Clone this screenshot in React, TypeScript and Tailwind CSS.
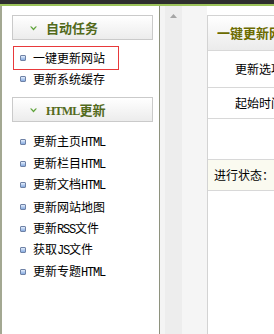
import React from "react";

const Bullet = () => (
  <span className="block w-[6px] h-[6px] border border-[#6f82a6] rounded-[1px] bg-linear-to-b from-[#e4eefc] to-[#86aadf] shrink-0" />
);

const En = ({ children }: { children: React.ReactNode }) => (
  <span className="font-['Liberation_Mono',monospace] text-[12px] tracking-[-1.2px]">{children}</span>
);

const Chevron = () => (
  <svg width="7" height="5" viewBox="0 0 7 5" className="shrink-0">
    <path d="M0 0.5 L3.5 4.5 L7 0.5 L5.4 0.5 L3.5 2.6 L1.6 0.5 Z" fill="#5fa33a" />
  </svg>
);

function Header({ children }: { children: React.ReactNode }) {
  return (
    <div className="ml-[10px] w-[141px] h-[25px] border border-[#cacaca] bg-linear-to-b from-white to-[#ececec] flex items-center">
      <span className="ml-[17px] mt-[2px]"><Chevron /></span>
      <span className="ml-[9px] text-[13px] font-bold text-[#536a1c]">{children}</span>
    </div>
  );
}

function Item({ children, active, h }: { children: React.ReactNode; active?: boolean; h: string }) {
  return (
    <div
      className={
        "ml-[12px] flex items-center pl-[6px] gap-[7px] text-[12px] text-black " +
        h +
        (active ? " w-[104px] outline outline-1 outline-[#e8393b]" : "")
      }
    >
      <Bullet />
      <span className="leading-none whitespace-nowrap">{children}</span>
    </div>
  );
}

export default function App() {
  const rowA = "h-[21.5px]";
  const rowB = "h-[21.7px]";
  return (
    <div className="w-[274px] h-[334px] overflow-hidden bg-white font-['Noto_Sans_CJK_SC',sans-serif] flex flex-col">
      <div className="h-[4px] bg-[#2e2e2e] shrink-0" />
      <div className="h-[2px] bg-[#9cc35b] shrink-0" />
      <div className="flex flex-1 min-h-0">
        <div className="w-[2px] bg-[#a3a892]" />
        {/* left menu */}
        <div className="w-[157px] bg-white">
          <div className="mt-[9px]">
            <Header>自动任务</Header>
          </div>
          <div className="mt-[7px]">
            <Item active h={rowA}>一键更新网站</Item>
            <Item h={rowA}>更新系统缓存</Item>
          </div>
          <div className="mt-[7px]">
            <Header>
              <span className="font-['Liberation_Serif',serif] text-[12px] tracking-[-0.8px]">HTML</span>更新
            </Header>
          </div>
          <div className="mt-[9px]">
            <Item h={rowB}>更新主页<En>HTML</En></Item>
            <Item h={rowB}>更新栏目<En>HTML</En></Item>
            <Item h={rowB}>更新文档<En>HTML</En></Item>
            <Item h={rowB}>更新网站地图</Item>
            <Item h={rowB}>更新<En>RSS</En>文件</Item>
            <Item h={rowB}>获取<En>JS</En>文件</Item>
            <Item h={rowB}>更新专题<En>HTML</En></Item>
          </div>
        </div>
        <div className="w-[1px] bg-[#8e927e]" />
        <div className="w-[5px] bg-[#f4f4f4]" />
        {/* scrollbar */}
        <div className="w-[17px] bg-[#ededed] flex justify-center pt-[8px]">
          <svg width="7" height="4" viewBox="0 0 7 4">
            <path d="M0 4 L3.5 0 L7 4 Z" fill="#a5a5a5" />
          </svg>
        </div>
        <div className="w-[25px] bg-[#f5f5f5]" />
        {/* right content */}
        <div className="flex-1 min-w-0 overflow-hidden bg-white pt-[9px]">
          <div className="w-[300px] h-full border-l border-t border-[#d3d3d3] text-[12px] text-black">
            <div className="h-[35px] border-b border-[#d8d8d8] bg-linear-to-b from-white to-[#ebebeb] flex items-center pl-[9px]">
              <span className="text-[13px] font-bold text-[#6b6b00] whitespace-nowrap">一键更新网站</span>
            </div>
            <div className="h-[37px] border-b border-[#d8d8d8] flex items-center pl-[27px]">
              <span className="whitespace-nowrap">更新选项</span>
            </div>
            <div className="h-[31px] border-b border-[#d8d8d8] flex items-center pl-[27px]">
              <span className="whitespace-nowrap">起始时间</span>
            </div>
            <div className="h-[40px]" />
            <div className="h-[32px] border-y border-[#d8d8d8] bg-[#fafaf0] flex items-center pl-[6px]">
              <span className="whitespace-nowrap">进行状态：</span>
            </div>
          </div>
        </div>
      </div>
    </div>
  );
}
